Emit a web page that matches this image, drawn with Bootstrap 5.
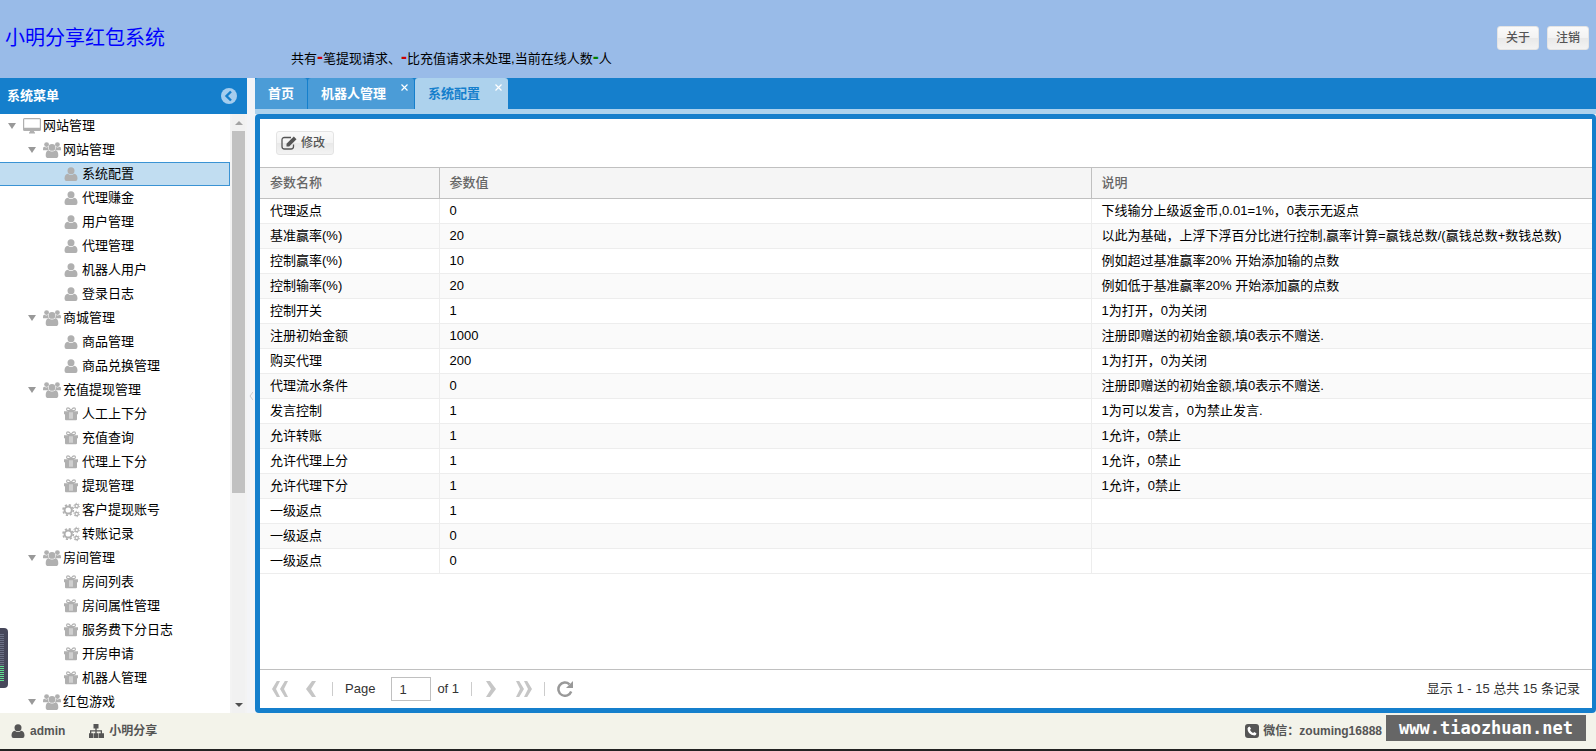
<!DOCTYPE html>
<html lang="zh-CN">
<head>
<meta charset="utf-8">
<meta name="viewport" content="width=device-width, initial-scale=1">
<title>小明分享红包系统</title>
<link href="https://cdn.jsdelivr.net/npm/bootstrap@5.3.0/dist/css/bootstrap.min.css" rel="stylesheet">
<style>
  body { font: 13px/24px "Liberation Sans", "Noto Sans CJK SC", sans-serif; color: #000; background: #f3f3f3; }
  a { color: inherit; text-decoration: none; }
  svg { display: block; flex: none; fill: currentColor; }
  .top-bar { height: 78px; background: #99bbe8; padding: 0 7px 2px 5px; }
  .site-name { font-size: 20px; width: 286px; margin: 0; font-weight: 400; color: #00f; }
  .notice { align-self: flex-end; line-height: 20px; margin-bottom: 7px; }
  .notice b { font-size: 18px; line-height: 16px; }
  .ext-btn { height: 24px; padding: 0 8px; font-size: 12px; line-height: 20px; font-weight: 500; color: #555; border: 1px solid #e4e4e4; border-radius: 3px; background: linear-gradient(#fafafa, #f3f3f3 48%, #e9e9e9 52%, #f3f3f3); }
  .side { width: 247px; }
  .side-head { height: 36px; background: #157fcc; color: #fff; font-weight: 700; padding: 0 10px 0 7px; }
  .tree { width: 230px; background: #fff; }
  .tree a { height: 24px; gap: 2px; line-height: 22px; border: 1px solid transparent; border-left: 0; white-space: nowrap; }
  .tree svg { color: #b0b0b0; }
  .tree a.on { background: #c1ddf1; border-color: #3a93d4; }
  .lv1 { padding-left: 8px; } .lv2 { padding-left: 28px; } .lv3 { padding-left: 62px; }
  .twist { width: 8px; margin-right: 5px; border: 4px solid transparent; border-top: 6px solid #999; border-bottom: 0; }
  .scroll { width: 13px; margin: 0 2px; background: #f1f1f1; }
  .scroll-arrow { height: 17px; }
  .scroll-thumb { height: 64%; background: #c1c1c1; }
  .split { width: 8px; background: #f3f4f7; color: #ccc; }
  .tabs { height: 36px; background: #157fcc; border-bottom: 5px solid #add2ed; gap: 1px; }
  .tab-btn { height: 31px; padding: 0 13px; border: 0; border-radius: 3px 3px 0 0; background: #4b9cd7; color: #fff; font-weight: 700; line-height: 30px; }
  .tab-btn.closable { padding-right: 28px; }
  .tab-btn.on { background: #add2ed; color: #157fcc; }
  .tab-close { position: absolute; right: 6px; top: 6px; width: 7px; height: 7px; color: #fff; }
  .pane { border: 5px solid #157fcc; border-right-width: 4px; border-radius: 4px; background: #fff; }
  .tools { height: 49px; padding: 0 16px; border-bottom: 1px solid #c0c0c0; }
  .grid { table-layout: fixed; line-height: 24px; }
  .grid th, .grid td { padding: 0 10px; white-space: nowrap; overflow: hidden; }
  .grid th { height: 30px; background: #f5f5f5; color: #666; font-weight: 500; border-bottom: 1px solid #c0c0c0; border-right: 1px solid #c0c0c0; }
  .grid td { height: 25px; border-bottom: 1px solid #ededed; border-right: 1px solid #ededed; }
  .grid th:last-child, .grid td:last-child { border-right: 0; }
  .grid tbody tr:nth-child(even) { background: #fafafa; }
  .c1 { width: 179px; } .c2 { width: 652px; }
  .pager { height: 39px; padding: 0 12px; border-top: 1px solid #c0c0c0; color: #333; }
  .pg-btn { border: 0; background: none; padding: 0; color: #c6c6c6; }
  .pg-prev { margin: 0 16px 0 18px; }
  .pg-next { margin: 0 20px 0 14px; }
  .pg-total { margin: 0 12px 0 6px; }
  .pg-sep { width: 1px; height: 14px; background: #ccc; }
  .pg-num { width: 40px; height: 24px; padding: 0 7px; border: 1px solid #c0c0c0; color: #333; line-height: 22px; }
  .foot { height: 38px; background: #f3f3ea; color: #555; font-size: 12px; font-weight: 700; border-bottom: 2px solid #222; padding: 0 10px; }
  .stamp { width: 200px; height: 26px; margin-top: 2px; background: #666; color: #fff; font: 700 17px/26px "DejaVu Sans Mono", monospace; text-align: center; }
  .meter { position: fixed; left: 0; bottom: 63px; width: 8px; height: 60px; border-radius: 0 4px 4px 0; background: #46475a; padding: 6px 4px 6px 0; }
  .meter-fill { height: 100%; background: repeating-linear-gradient(#0000 0 1px, #46475a 1px 2px), linear-gradient(#6b7186 65%, #5fe08f 65%); }
</style>
</head>
<body class="vh-100 d-flex flex-column overflow-hidden">
<svg width="0" height="0" class="position-absolute" aria-hidden="true">
  <symbol id="desk" viewBox="0 0 18 16"><path fill-rule="evenodd" d="M1.500 0H16.500Q18 0 18 1.500V11.500Q18 13 16.500 13H11Q11 14 12 14.500V15.500H6V14.500Q7 14 7 13H1.500Q0 13 0 11.500V1.500Q0 0 1.500 0zM1.200 1.200V9.800H16.800V1.200z"/></symbol>
  <symbol id="users" viewBox="0 0 18 16"><circle cx="3.600" cy="2.600" r="2.400"/><circle cx="14.400" cy="2.600" r="2.400"/><path d="M0 8V7q0-2.500 1.500-2.300Q3 6 5 5.100 5 7 6 8.200H2Q0 8.500 0 8zM18 8V7q0-2.500-1.500-2.300-1.500 1.300-3.500.4 0 1.900-1 3.100h4q2 .3 2-.2z"/><circle cx="9" cy="5.400" r="3.400"/><path d="M5.600 8.200q3.400 2.600 6.800 0 2.900.6 2.900 5 0 2.800-2.300 2.800H5q-2.300 0-2.300-2.800 0-4.400 2.900-5z"/></symbol>
  <symbol id="user" viewBox="0 0 18 16"><circle cx="9" cy="4.700" r="3.500"/><path d="M5.800 7.700Q9 10.100 12.200 7.700q3.300.6 3.300 4.800 0 2.500-2 2.500H4.500q-2 0-2-2.500 0-4.200 3.300-4.800z"/></symbol>
  <symbol id="gift" viewBox="0 0 18 16"><path fill-rule="evenodd" d="M2 5.200h4.500q-2.500-.1-2.500-2T6 1.300q1.500 0 3 2.300 1.500-2.300 3-2.300 2 0 2 1.900t-2.500 2H16v3h-1v5q0 1-1 1H4q-1 0-1-1v-5H2zM6 2.500q-1 0-1 .8t1 .8h2Q7 2.500 6 2.500zm6 0q-1 0-2 1.600h2q1 0 1-.8t-1-.8zM7.600 6.200v6.500h.8V6.200zm2 0v6.500h.8V6.200z"/></symbol>
  <symbol id="cogs" viewBox="0 0 18 16"><circle cx="6.200" cy="8" r="3.600" fill="none" stroke="currentColor" stroke-width="2"/><circle cx="6.200" cy="8" r="5.200" fill="none" stroke="currentColor" stroke-width="1.600" stroke-dasharray="2.200 1.880"/><g fill="none" stroke="currentColor"><circle cx="14.700" cy="4" r="1.700" stroke-width="1.200"/><circle cx="14.700" cy="4" r="2.700" stroke-width="1" stroke-dasharray="1.400 1.420"/><circle cx="14.700" cy="12" r="1.700" stroke-width="1.200"/><circle cx="14.700" cy="12" r="2.700" stroke-width="1" stroke-dasharray="1.400 1.420"/></g></symbol>
  <symbol id="x" viewBox="0 0 7 7"><path d="M.5.500l6 6m0-6l-6 6" stroke="currentColor" stroke-width="1.200"/></symbol>
  <symbol id="chev" viewBox="0 0 10 16"><path d="M6 0h4L5 8l5 8H6L0 8z"/></symbol>
</svg>

<header class="top-bar d-flex align-items-center flex-shrink-0">
  <h1 class="site-name"><a href="#">小明分享红包系统</a></h1>
  <div class="notice">共有<b style="color:#c00">-</b>笔提现请求、<b style="color:#c00">-</b>比充值请求未处理,当前在线人数<b style="color:green">-</b>人</div>
  <div class="ms-auto d-flex gap-2">
    <button type="button" class="ext-btn">关于</button>
    <button type="button" class="ext-btn">注销</button>
  </div>
</header>

<main class="d-flex flex-grow-1 overflow-hidden">
  <aside class="side d-flex flex-column flex-shrink-0">
    <div class="side-head d-flex align-items-center justify-content-between flex-shrink-0">系统菜单
      <svg width="16" height="16" viewBox="0 0 16 16"><circle cx="8" cy="8" r="8" fill="#a5cdee"/><path d="M10 3.500L5.500 8l4.500 4.500" fill="none" stroke="#157fcc" stroke-width="2.400"/></svg>
    </div>
    <div class="d-flex flex-grow-1 overflow-hidden">
      <nav class="tree overflow-hidden" id="tree" aria-label="系统菜单">
        <a href="#" class="lv1 d-flex align-items-center"><i class="twist"></i><svg width="18" height="16"><use href="#desk"/></svg>网站管理</a>
        <a href="#" class="lv2 d-flex align-items-center"><i class="twist"></i><svg width="18" height="16"><use href="#users"/></svg>网站管理</a>
        <a href="#" class="lv3 d-flex align-items-center on"><svg width="18" height="16"><use href="#user"/></svg>系统配置</a>
        <a href="#" class="lv3 d-flex align-items-center"><svg width="18" height="16"><use href="#user"/></svg>代理赚金</a>
        <a href="#" class="lv3 d-flex align-items-center"><svg width="18" height="16"><use href="#user"/></svg>用户管理</a>
        <a href="#" class="lv3 d-flex align-items-center"><svg width="18" height="16"><use href="#user"/></svg>代理管理</a>
        <a href="#" class="lv3 d-flex align-items-center"><svg width="18" height="16"><use href="#user"/></svg>机器人用户</a>
        <a href="#" class="lv3 d-flex align-items-center"><svg width="18" height="16"><use href="#user"/></svg>登录日志</a>
        <a href="#" class="lv2 d-flex align-items-center"><i class="twist"></i><svg width="18" height="16"><use href="#users"/></svg>商城管理</a>
        <a href="#" class="lv3 d-flex align-items-center"><svg width="18" height="16"><use href="#user"/></svg>商品管理</a>
        <a href="#" class="lv3 d-flex align-items-center"><svg width="18" height="16"><use href="#user"/></svg>商品兑换管理</a>
        <a href="#" class="lv2 d-flex align-items-center"><i class="twist"></i><svg width="18" height="16"><use href="#users"/></svg>充值提现管理</a>
        <a href="#" class="lv3 d-flex align-items-center"><svg width="18" height="16"><use href="#gift"/></svg>人工上下分</a>
        <a href="#" class="lv3 d-flex align-items-center"><svg width="18" height="16"><use href="#gift"/></svg>充值查询</a>
        <a href="#" class="lv3 d-flex align-items-center"><svg width="18" height="16"><use href="#gift"/></svg>代理上下分</a>
        <a href="#" class="lv3 d-flex align-items-center"><svg width="18" height="16"><use href="#gift"/></svg>提现管理</a>
        <a href="#" class="lv3 d-flex align-items-center"><svg width="18" height="16"><use href="#cogs"/></svg>客户提现账号</a>
        <a href="#" class="lv3 d-flex align-items-center"><svg width="18" height="16"><use href="#cogs"/></svg>转账记录</a>
        <a href="#" class="lv2 d-flex align-items-center"><i class="twist"></i><svg width="18" height="16"><use href="#users"/></svg>房间管理</a>
        <a href="#" class="lv3 d-flex align-items-center"><svg width="18" height="16"><use href="#gift"/></svg>房间列表</a>
        <a href="#" class="lv3 d-flex align-items-center"><svg width="18" height="16"><use href="#gift"/></svg>房间属性管理</a>
        <a href="#" class="lv3 d-flex align-items-center"><svg width="18" height="16"><use href="#gift"/></svg>服务费下分日志</a>
        <a href="#" class="lv3 d-flex align-items-center"><svg width="18" height="16"><use href="#gift"/></svg>开房申请</a>
        <a href="#" class="lv3 d-flex align-items-center"><svg width="18" height="16"><use href="#gift"/></svg>机器人管理</a>
        <a href="#" class="lv2 d-flex align-items-center"><i class="twist"></i><svg width="18" height="16"><use href="#users"/></svg>红包游戏</a>
      </nav>
      <div class="scroll d-flex flex-column" aria-hidden="true">
        <div class="scroll-arrow d-flex align-items-center justify-content-center"><svg width="8" height="4"><path d="M0 4l4-4 4 4z" fill="#a3a3a3"/></svg></div>
        <div class="flex-grow-1"><div class="scroll-thumb"></div></div>
        <div class="scroll-arrow d-flex align-items-center justify-content-center"><svg width="8" height="4"><path d="M0 0l4 4 4-4z" fill="#505050"/></svg></div>
      </div>
    </div>
  </aside>
  <div class="split d-flex align-items-center justify-content-center flex-shrink-0"><svg width="4" height="8"><path d="M4 0L1 4l3 4" fill="none" stroke="currentColor"/></svg></div>

  <section class="d-flex flex-column flex-grow-1 overflow-hidden">
    <div class="tabs d-flex flex-shrink-0" role="tablist">
      <button type="button" role="tab" class="tab-btn">首页</button>
      <button type="button" role="tab" class="tab-btn closable position-relative">机器人管理<svg class="tab-close"><use href="#x"/></svg></button>
      <button type="button" role="tab" aria-selected="true" class="tab-btn closable on position-relative">系统配置<svg class="tab-close"><use href="#x"/></svg></button>
    </div>
    <div class="pane d-flex flex-column flex-grow-1 overflow-hidden">
      <div class="tools d-flex align-items-center flex-shrink-0">
        <button type="button" class="ext-btn d-flex align-items-center gap-1 ps-1"><svg width="16" height="14" viewBox="0 0 16 14"><path d="M10 1.500H3.500Q1 1.500 1 4v6.500Q1 13 3.500 13H10q2.500 0 2.500-2.500V8.500" fill="none" stroke="currentColor" stroke-width="1.300"/><path d="M5.500 10.500V7.800L12.800.500l2.700 2.700-7.300 7.300z"/></svg>修改</button>
      </div>
      <div class="flex-grow-1 overflow-hidden">
        <table class="grid w-100">
          <colgroup><col class="c1"><col class="c2"><col></colgroup>
          <thead><tr><th>参数名称</th><th>参数值</th><th>说明</th></tr></thead>
          <tbody>
            <tr><td>代理返点</td><td>0</td><td>下线输分上级返金币,0.01=1%，0表示无返点</td></tr>
            <tr><td>基准赢率(%)</td><td>20</td><td>以此为基础，上浮下浮百分比进行控制,赢率计算=赢钱总数/(赢钱总数+数钱总数)</td></tr>
            <tr><td>控制赢率(%)</td><td>10</td><td>例如超过基准赢率20% 开始添加输的点数</td></tr>
            <tr><td>控制输率(%)</td><td>20</td><td>例如低于基准赢率20% 开始添加赢的点数</td></tr>
            <tr><td>控制开关</td><td>1</td><td>1为打开，0为关闭</td></tr>
            <tr><td>注册初始金额</td><td>1000</td><td>注册即赠送的初始金额,填0表示不赠送.</td></tr>
            <tr><td>购买代理</td><td>200</td><td>1为打开，0为关闭</td></tr>
            <tr><td>代理流水条件</td><td>0</td><td>注册即赠送的初始金额,填0表示不赠送.</td></tr>
            <tr><td>发言控制</td><td>1</td><td>1为可以发言，0为禁止发言.</td></tr>
            <tr><td>允许转账</td><td>1</td><td>1允许，0禁止</td></tr>
            <tr><td>允许代理上分</td><td>1</td><td>1允许，0禁止</td></tr>
            <tr><td>允许代理下分</td><td>1</td><td>1允许，0禁止</td></tr>
            <tr><td>一级返点</td><td>1</td><td></td></tr>
            <tr><td>一级返点</td><td>0</td><td></td></tr>
            <tr><td>一级返点</td><td>0</td><td></td></tr>
          </tbody>
        </table>
      </div>
      <div class="pager d-flex align-items-center flex-shrink-0">
        <button type="button" class="pg-btn d-flex" aria-label="首页"><svg width="8" height="16" viewBox="0 0 10 16" preserveAspectRatio="none"><path d="M6 0h4L5 8l5 8H6L0 8z"/></svg><svg width="8" height="16" viewBox="0 0 10 16" preserveAspectRatio="none"><path d="M6 0h4L5 8l5 8H6L0 8z"/></svg></button>
        <button type="button" class="pg-btn pg-prev" aria-label="上一页"><svg width="10" height="16"><use href="#chev"/></svg></button>
        <span class="pg-sep"></span>
        <label for="pg" class="ps-2 ms-1 me-3">Page</label>
        <input id="pg" class="pg-num" type="text" value="1">
        <span class="pg-total">of 1</span>
        <span class="pg-sep"></span>
        <button type="button" class="pg-btn pg-next" aria-label="下一页"><svg width="10" height="16" viewBox="0 0 10 16"><path d="M4 0H0l5 8-5 8h4l6-8z"/></svg></button>
        <button type="button" class="pg-btn d-flex me-2 pe-1" aria-label="末页"><svg width="8" height="16" viewBox="0 0 10 16" preserveAspectRatio="none"><path d="M4 0H0l5 8-5 8h4l6-8z"/></svg><svg width="8" height="16" viewBox="0 0 10 16" preserveAspectRatio="none"><path d="M4 0H0l5 8-5 8h4l6-8z"/></svg></button>
        <span class="pg-sep"></span>
        <button type="button" class="pg-btn ms-2 ps-1" aria-label="刷新"><svg width="16" height="16" viewBox="0 0 16 16" color="#999"><path d="M12.500 3.300A6.600 6.600 0 1 0 14.200 10.500" fill="none" stroke="currentColor" stroke-width="2.500"/><path d="M16 0v7H9z"/></svg></button>
        <span class="ms-auto">显示 1 - 15 总共 15 条记录</span>
      </div>
    </div>
  </section>
</main>

<footer class="foot d-flex align-items-center flex-shrink-0">
  <svg width="16" height="15" viewBox="1 1 16 15"><use href="#user" width="18" height="16"/></svg><span class="ms-1">admin</span>
  <svg class="ms-4" width="16" height="14" viewBox="2 0 16 14"><path transform="translate(1)" d="M5.500 0h5v4.500H8.700v1.700H14v3h2V14h-5V9.200h1.700V7.500H8.700v1.700h1.800V14h-5V9.200h1.800V7.500h-4v1.700H5V14H0V9.200h2V6.200h5.300V4.500H5.500z"/></svg><span class="ms-1">小明分享</span>
  <svg class="ms-auto" width="14" height="14" viewBox="0 0 14 14"><rect width="14" height="14" rx="3"/><path d="M4.500 2.500l1.500 2-1 1.500q1 2 3 3l1.500-1 2 1.500q-.5 2-2 2-7-1-7-7 .5-1.700 2-2z" fill="#fff"/></svg>
  <span class="ms-1 me-1">微信：zouming16888</span>
  <span class="stamp align-self-start">www.tiaozhuan.net</span>
</footer>
<div class="meter" aria-hidden="true"><div class="meter-fill"></div></div>
<script src="https://cdn.jsdelivr.net/npm/bootstrap@5.3.0/dist/js/bootstrap.bundle.min.js"></script>
</body>
</html>
